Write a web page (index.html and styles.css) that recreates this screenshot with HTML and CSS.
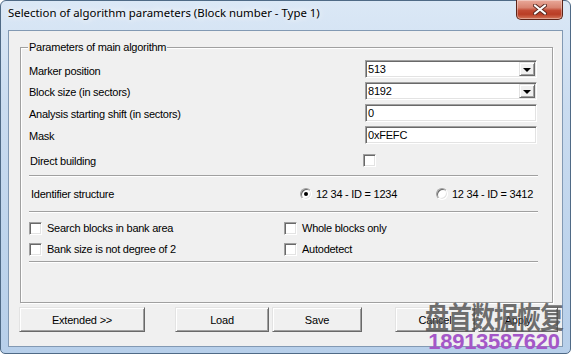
FILE: index.html
```html
<!DOCTYPE html>
<html>
<head>
<meta charset="utf-8">
<link rel="stylesheet" href="styles.css">
</head>
<body>
<div class="window">
  <div class="titlebar">
    <span class="title">Selection of algorithm parameters (Block number - Type 1)</span>
    <div class="close">
      <svg width="14" height="11" viewBox="0 0 14 11">
        <path d="M2 1.5 L12 9.5 M12 1.5 L2 9.5" stroke="#5a2a22" stroke-width="4" stroke-linecap="round"/>
        <path d="M2 1.5 L12 9.5 M12 1.5 L2 9.5" stroke="#ffffff" stroke-width="2.2" stroke-linecap="round"/>
      </svg>
    </div>
  </div>
  <div class="client">
    <div class="group">
      <span class="legend">Parameters of main algorithm</span>
      <div class="params">
        <span class="lbl lbl-first">Marker position</span>
        <div class="field combo"><span class="val">513</span><span class="drop"><span class="arrow"></span></span></div>
        <span class="lbl">Block size (in sectors)</span>
        <div class="field combo"><span class="val">8192</span><span class="drop"><span class="arrow"></span></span></div>
        <span class="lbl">Analysis starting shift (in sectors)</span>
        <div class="field"><span class="val">0</span></div>
        <span class="lbl">Mask</span>
        <div class="field"><span class="val">0xFEFC</span></div>
      </div>
      <div class="direct">
        <span class="lbl-direct">Direct building</span>
        <span class="check check-direct"></span>
      </div>
      <div class="sep sep-1"></div>
      <div class="ident">
        <span>Identifier structure</span>
        <span class="radio-item"><span class="radio checked"></span>12 34 - ID = 1234</span>
        <span class="radio-item"><span class="radio"></span>12 34 - ID = 3412</span>
      </div>
      <div class="sep sep-2"></div>
      <div class="options">
        <span class="opt"><span class="check"></span>Search blocks in bank area</span>
        <span class="opt"><span class="check"></span>Whole blocks only</span>
        <span class="opt"><span class="check"></span>Bank size is not degree of 2</span>
        <span class="opt"><span class="check"></span>Autodetect</span>
      </div>
      <div class="sep sep-3"></div>
    </div>
    <div class="buttons">
      <button class="btn btn-ext">Extended &gt;&gt;</button>
      <button class="btn btn-load">Load</button>
      <button class="btn btn-save">Save</button>
      <button class="btn btn-cancel">Cancel</button>
      <button class="btn btn-apply">Apply</button>
    </div>
  </div>
  <div class="watermark">
    <div class="wm-cn">盘首数据恢复</div>
    <div class="wm-num">18913587620</div>
  </div>
</div>
</body>
</html>
```

FILE: styles.css
```css
* { box-sizing: border-box; }
html, body { margin: 0; padding: 0; }
body {
  width: 571px;
  height: 354px;
  overflow: hidden;
  background: #ffffff;
  font-family: "Liberation Sans", Arial, sans-serif;
  font-size: 11px;
  color: #000;
}
.window {
  position: relative;
  width: 571px;
  height: 354px;
  display: flex;
  flex-direction: column;
  border: 1px solid #4f6a86;
  border-radius: 6px 6px 5px 5px;
  padding: 0 7px 6px 7px;
  background: linear-gradient(180deg, #dbe8f6 0%, #cadcf0 30%, #bed4ec 70%, #b7cfea 100%);
}
.titlebar {
  height: 29px;
  display: flex;
  justify-content: space-between;
  align-items: flex-start;
}
.title {
  font-family: "Noto Sans", "Open Sans", sans-serif;
  font-size: 11.4px;
  line-height: 14px;
  margin-top: 5px;
  color: #000;
  text-shadow: 0 0 6px #fff, 0 0 10px #fff;
}
.close {
  width: 47px;
  height: 20px;
  margin-top: -1px;
  border: 1px solid #5d2418;
  border-top: none;
  border-radius: 0 0 5px 5px;
  background: linear-gradient(180deg, #e9a99a 0%, #d88471 40%, #c24a33 55%, #b93d25 75%, #d4765a 100%);
  box-shadow: inset 0 0 0 1px rgba(255,255,255,0.35);
  display: flex;
  align-items: center;
  justify-content: center;
}
.client {
  flex: 1;
  background: #f0f0f0;
  border: 1px solid #8299b3;
  display: flex;
  flex-direction: column;
}
.group {
  position: relative;
  margin: 16px 0 0 11px;
  width: 533px;
  height: 256px;
  border: 1px solid #a0a0a0;
  box-shadow: inset 1px 1px 0 #fff, 1px 1px 0 #fff;
  padding: 12px 15px 0 8px;
}
.legend {
  position: absolute;
  top: -8px;
  left: 7px;
  padding: 0 1px;
  background: #f0f0f0;
  line-height: 14px;
  letter-spacing: -0.25px;
}
.params {
  display: grid;
  grid-template-columns: 1fr 172px;
  grid-auto-rows: 18px;
  row-gap: 4px;
}
.lbl {
  align-self: center;
  padding-top: 2px;
  letter-spacing: -0.25px;
  line-height: 13px;
}
.lbl-first { padding-top: 4px; }
.field {
  height: 18px;
  background: #fff;
  border: 1px solid;
  border-color: #a0a0a0 #fff #fff #a0a0a0;
  box-shadow: inset 1px 1px 0 #696969, inset -1px -1px 0 #e3e3e3;
  display: flex;
  align-items: center;
  padding: 1px 2px 0 2px;
}
.val { flex: 1; letter-spacing: -0.2px; line-height: 13px; }
.combo { padding-right: 1px; }
.drop {
  width: 16px;
  height: 14px;
  margin-top: -1px;
  background: #f0f0f0;
  border: 1px solid;
  border-color: #e3e3e3 #696969 #696969 #e3e3e3;
  box-shadow: inset 1px 1px 0 #fff, inset -1px -1px 0 #a0a0a0;
  display: flex;
  align-items: center;
  justify-content: center;
}
.arrow {
  width: 0;
  height: 0;
  border-left: 4px solid transparent;
  border-right: 4px solid transparent;
  border-top: 4px solid #000;
  margin-top: 1px;
}
.direct {
  display: grid;
  grid-template-columns: 1fr 172px;
  height: 13px;
  margin-top: 9px;
  align-items: center;
}
.lbl-direct { padding-left: 1px; letter-spacing: -0.25px; padding-top: 2px; }
.check {
  display: inline-block;
  width: 13px;
  height: 13px;
  background: #fff;
  border: 1px solid;
  border-color: #a0a0a0 #fff #fff #a0a0a0;
  box-shadow: inset 1px 1px 0 #696969, inset -1px -1px 0 #e3e3e3;
  flex: none;
}
.check-direct { margin-left: -2px; }
.sep {
  height: 2px;
  border-top: 1px solid #a0a0a0;
  border-bottom: 1px solid #fff;
  margin-right: -1px;
}
.sep-1 { margin-top: 9px; }
.sep-2 { margin-top: 11px; }
.sep-3 { margin-top: 5px; }
.ident {
  display: grid;
  grid-template-columns: 269px 136px 1fr;
  padding-left: 2px;
  height: 13px;
  margin-top: 10px;
  align-items: center;
  letter-spacing: -0.25px;
}
.radio-item {
  display: flex;
  align-items: center;
  gap: 4px;
}
.radio {
  width: 12px;
  height: 12px;
  border-radius: 50%;
  border: 1px solid;
  border-color: #a0a0a0 #fff #fff #a0a0a0;
  background: #fff;
  box-shadow: inset 1px 1px 0 #696969, inset -1px -1px 0 #e3e3e3;
  position: relative;
  flex: none;
}
.radio.checked::after {
  content: "";
  position: absolute;
  left: 3px;
  top: 3px;
  width: 4px;
  height: 4px;
  border-radius: 50%;
  background: #000;
}
.options {
  display: grid;
  grid-template-columns: 255px 1fr;
  grid-auto-rows: 13px;
  row-gap: 8px;
  margin-top: 9px;
}
.opt {
  display: flex;
  align-items: center;
  gap: 5px;
  letter-spacing: -0.25px;
  line-height: 13px;
}
.buttons {
  display: flex;
  margin: 4px 0 0 10px;
  height: 25px;
}
.btn {
  height: 25px;
  padding: 0;
  background: #f0f0f0;
  border: 1px solid;
  border-color: #e3e3e3 #696969 #696969 #e3e3e3;
  box-shadow: inset 1px 1px 0 #fff, inset -1px -1px 0 #a0a0a0;
  font-family: "Liberation Sans", Arial, sans-serif;
  font-size: 11px;
  letter-spacing: -0.2px;
  color: #000;
}
.btn-ext { width: 126px; }
.btn-load { width: 94px; margin-left: 30px; }
.btn-save { width: 90px; margin-left: 3px; }
.btn-cancel { width: 80px; margin-left: 33px; }
.btn-apply { width: 80px; margin-left: 3px; }
.watermark {
  position: absolute;
  left: 424px;
  top: 296px;
  line-height: 1;
  text-align: center;
  pointer-events: none;
}
.wm-cn {
  font-family: "Noto Sans CJK SC", sans-serif;
  font-weight: 700;
  font-size: 24px;
  letter-spacing: -1px;
  color: rgba(80, 80, 80, 0.82);
  transform: scaleY(1.22);
  transform-origin: top left;
  height: 31px;
  padding-top: 3px;
}
.wm-num {
  font-family: "Liberation Sans", Arial, sans-serif;
  font-weight: 700;
  font-size: 22px;
  letter-spacing: -0.3px;
  color: #a457c8;
  margin-top: 3px;
}
```
